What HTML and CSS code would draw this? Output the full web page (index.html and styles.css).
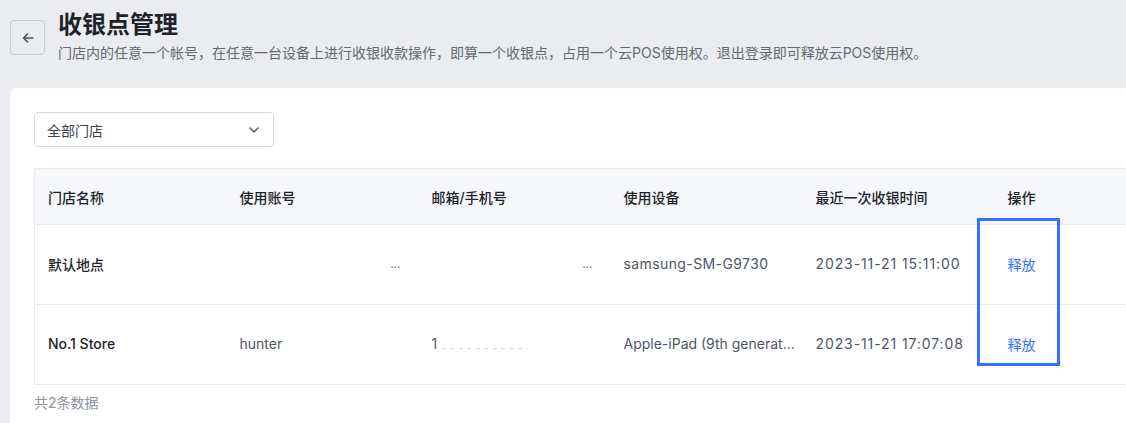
FILE: index.html
```html
<!DOCTYPE html>
<html lang="zh-CN">
<head>
<meta charset="utf-8">
<link rel="stylesheet" href="styles.css">
</head>
<body>
<div class="page">
  <header class="head">
    <button class="back" aria-label="返回">
      <svg width="14" height="14" viewBox="0 0 14 14"><path d="M12 7H2.5M6.5 3L2.5 7l4 4" fill="none" stroke="#4e5565" stroke-width="1.6" stroke-linecap="round" stroke-linejoin="round"/></svg>
    </button>
    <div class="titles">
      <h1 class="title">收银点管理</h1>
      <p class="sub">门店内的任意一个帐号，在任意一台设备上进行收银收款操作，即算一个收银点，占用一个云POS使用权。退出登录即可释放云POS使用权。</p>
    </div>
  </header>
  <section class="card">
    <div class="select">
      <span>全部门店</span>
      <svg width="10" height="6" viewBox="0 0 10 6"><path d="M1 1l4 4 4-4" fill="none" stroke="#4e5565" stroke-width="1.4" stroke-linecap="round" stroke-linejoin="round"/></svg>
    </div>
    <div class="tablewrap">
      <table class="tbl">
        <thead>
          <tr><th>门店名称</th><th>使用账号</th><th>邮箱/手机号</th><th>使用设备</th><th>最近一次收银时间</th><th class="op">操作</th></tr>
        </thead>
        <tbody>
          <tr>
            <td class="store">默认地点</td>
            <td class="redact">...</td>
            <td class="redact">...</td>
            <td class="wide">samsung-SM-G9730</td>
            <td class="time">2023-11-21 15:11:00</td>
            <td class="op"><a class="link">释放</a></td>
          </tr>
          <tr>
            <td class="store">No.1 Store</td>
            <td>hunter</td>
            <td>1<span class="dash"></span></td>
            <td>Apple-iPad (9th generat...</td>
            <td class="time">2023-11-21 17:07:08</td>
            <td class="op"><a class="link">释放</a></td>
          </tr>
        </tbody>
      </table>
      <div class="mark"></div>
    </div>
    <p class="total">共2条数据</p>
  </section>
</div>
</body>
</html>
```
FILE: styles.css
```css
* { box-sizing: border-box; }
html, body { margin: 0; padding: 0; }
body {
  background: #ebecf0;
  font-family: Inter, "Noto Sans CJK SC", sans-serif;
  color: #1f2329;
  overflow: hidden;
  width: 1126px;
  height: 423px;
}
.page { padding: 10px 0 0 10px; }
.head { display: flex; align-items: flex-start; gap: 13px; }
.back {
  margin-top: 10px;
  width: 35px; height: 35px;
  border: 1px solid #c8cad2;
  border-radius: 4px;
  background: transparent;
  display: flex; align-items: center; justify-content: center;
  padding: 0;
}
.titles { display: flex; flex-direction: column; }
.title { margin: 0; font-size: 24px; line-height: 30px; font-weight: 600; color: #1f2329; }
.sub { margin: 3px 0 0; font-size: 14px; line-height: 20px; color: #646a73; white-space: nowrap; }
.card {
  margin-top: 25px;
  background: #fff;
  border-top-left-radius: 8px;
  padding: 24px 0 0 24px;
  width: 1200px;
  height: 340px;
}
.select {
  width: 240px; height: 35px;
  border: 1px solid #d6d8de;
  border-radius: 4px;
  display: flex; align-items: center; justify-content: space-between;
  padding: 0 14px 0 12px;
  font-size: 14px; color: #3b4049;
}
.tablewrap { position: relative; margin-top: 21px; width: 1152px; }
.tbl { border-collapse: collapse; width: 1152px; table-layout: fixed; font-size: 14px; }
.tbl th, .tbl td {
  width: 192px;
  text-align: left;
  padding: 0 18px 0 13px;
  white-space: nowrap; overflow: hidden;
  border-top: 1px solid #e9eaef;
  border-bottom: 1px solid #e9eaef;
}
.tbl tr > :first-child { border-left: 1px solid #e9eaef; }
.tbl th { height: 56px; background: #f6f7fa; font-weight: 500; color: #1f2329; padding-top: 1px; }
.tbl td { height: 80px; color: #4e5565; padding-bottom: 2px; }
.tbl td.store { color: #1f2329; font-weight: 500; }
.tbl td.redact { text-align: right; color: #646a73; font-size: 12px; }
.tbl td.time { letter-spacing: 0.9px; }
.tbl td.wide { letter-spacing: 0.4px; }
.tbl .op { padding-left: 13px; }
.dash {
  display: inline-block; width: 86px; height: 1px;
  background: repeating-linear-gradient(90deg, #cfd2d8 0 4px, transparent 4px 8.5px);
  margin-left: 5px; vertical-align: baseline;
}
.link { color: #3370ff; cursor: pointer; }
.mark {
  position: absolute;
  left: 943px; top: 50px;
  width: 83px; height: 148px;
  border: 3px solid #3370ff;
}
.total { margin: 8px 0 0; font-size: 14px; line-height: 20px; color: #8f959e; }
```
